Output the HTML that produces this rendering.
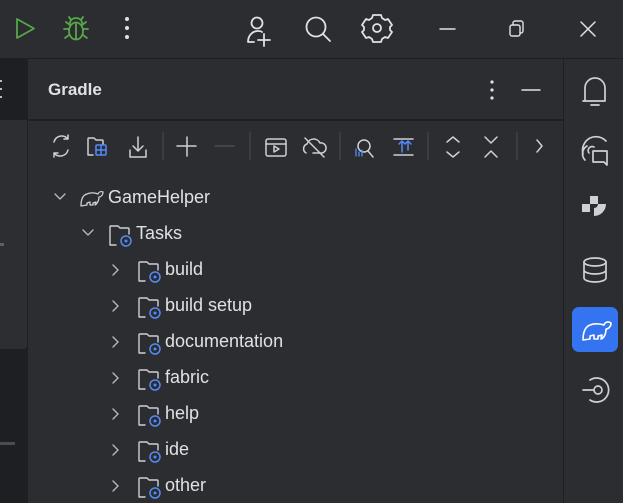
<!DOCTYPE html>
<html><head><style>
*{margin:0;padding:0;box-sizing:border-box}
body{width:623px;height:503px;background:#2b2d30;overflow:hidden;position:relative;font-family:"Liberation Sans",sans-serif;color:#dfe1e5}
.a{position:absolute}
svg{position:absolute;overflow:visible}
.t{position:absolute;font-size:18px;color:#dfe1e5;white-space:nowrap}
</style></head><body>
<div class="a" style="left:0;top:0;width:623px;height:58px;background:#2b2d30"></div>
<div class="a" style="left:0;top:58px;width:623px;height:1px;background:#1e1f22"></div>
<svg width="623" height="58" style="left:0;top:0" fill="none" stroke-width="1.8" stroke-linecap="round" stroke-linejoin="round">
 <path d="M17 19 L17 38 L34 28.5 Z" stroke="#57a64a"/>
 <g stroke="#57a64a"><ellipse cx="76" cy="31" rx="7" ry="8.5"/><path d="M70 23 a6 5 0 0 1 12 0 M76 24 V39 M69 29 H64 M83 29 H88 M69 35 L65 38 M83 35 L87 38 M70 25 L66 22 M82 25 L86 22 M71 20 L69 17 M81 20 L83 17"/></g>
 <g fill="#dfe1e5" stroke="none"><circle cx="127" cy="19" r="2"/><circle cx="127" cy="28" r="2"/><circle cx="127" cy="37" r="2"/></g>
 <g stroke="#dfe1e5"><circle cx="257" cy="23" r="5.5"/><path d="M248 42 c0-6 4-11 10-11 c2 0 3 0 4 1 M248 42 H254 M264 34 V46 M258 40 H270"/></g>
 <g stroke="#dfe1e5"><circle cx="316" cy="27" r="9.5"/><path d="M323 34 L330 41"/></g>
 <g stroke="#dfe1e5"><circle cx="377" cy="28" r="4"/><path d="M373 15 h8 l1 3 3 2 3-1 4 6 -2 2 v3 l2 2 -4 6 -3 -1 -3 2 -1 3 h-8 l-1 -3 -3 -2 -3 1 -4 -6 2 -2 v-3 l-2 -2 4 -6 3 1 3 -2 z"/></g>
 <path d="M440 29 H455" stroke="#dfe1e5" stroke-width="1.4"/>
 <g stroke="#dfe1e5" stroke-width="1.4"><rect x="510" y="25" width="10" height="11" rx="2"/><path d="M513 25 v-2 a2 2 0 0 1 2-2 h6 a2 2 0 0 1 2 2 v8 a2 2 0 0 1 -2 2 h-1"/></g>
 <path d="M581 22 L595 36 M595 22 L581 36" stroke="#dfe1e5" stroke-width="1.5"/>
</svg>
<div class="a" style="left:0;top:59px;width:28px;height:444px;background:#1e1f22"></div>
<div class="a" style="left:0;top:120px;width:27px;height:229px;background:#2d2e31;border-radius:0 0 3px 0"></div>
<div class="a" style="left:0;top:243px;width:4px;height:3px;background:#5a5d63"></div>
<div class="a" style="left:0;top:442px;width:15px;height:3px;background:#4a4c50"></div>
<div class="a" style="left:0;top:80px;width:2px;height:2px;background:#bbb"></div>
<div class="a" style="left:0;top:88px;width:2px;height:2px;background:#bbb"></div>
<div class="a" style="left:0;top:96px;width:2px;height:2px;background:#bbb"></div>
<div class="a" style="left:29px;top:59px;width:534px;height:444px;background:#2b2d30"></div>
<div class="a" style="left:29px;top:119px;width:534px;height:2px;background:#1e1f22"></div>
<div class="a" style="left:563px;top:59px;width:1px;height:444px;background:#1e1f22"></div>
<div class="t" style="left:48px;top:80px;font-weight:bold;font-size:17px">Gradle</div>
<svg width="623" height="503" style="left:0;top:0" fill="none" stroke-width="1.5" stroke-linecap="round" stroke-linejoin="round">
 <g fill="#dfe1e5" stroke="none"><circle cx="492" cy="82" r="1.6"/><circle cx="492" cy="90" r="1.6"/><circle cx="492" cy="98" r="1.6"/></g>
 <path d="M522 90 H540" stroke="#dfe1e5"/>
 <g stroke="#ced0d6">
  <path d="M54 142 a8 8 0 0 1 14-3 M68 135 v4 h-4 M68 150 a8 8 0 0 1 -14 3 M54 157 v-4 h4"/>
  <path d="M88 155 V139 a1 1 0 0 1 1-1 h5 l2 2 h6 a1 1 0 0 1 1 1 v3 M88 155 h5"/>
  <path d="M138 137 V150 M133 146 L138 151 L143 146 M130 150 V157 H146 V150"/>
  <path d="M187 137 V156 M177 146 H196"/>
  <rect x="266" y="139" width="20" height="17" rx="2"/><path d="M266 144 H286 M274 146 v6 l5 -3 z"/>
  <path d="M306 153 a5 5 0 0 1 1-9 a7 7 0 0 1 13-1 a5 5 0 0 1 2 10 h-9 M305 138 L324 157"/>
  <circle cx="364" cy="146" r="6"/><path d="M368 151 L373 157"/>
  <path d="M394 139 H413 M394 155 H413"/>
  <path d="M447 142 L453 137 L459 142 M447 152 L453 157 L459 152"/>
  <path d="M485 137 L491 143 L497 137 M485 157 L491 151 L497 157"/>
  <path d="M537 140 L542 146 L537 152"/>
 </g>
 <path d="M215 146 H234" stroke="#4a4c50"/>
 <g stroke="#4a4c50" stroke-width="1"><path d="M163 132 V160 M250 132 V160 M340 132 V160 M428 132 V160 M517 132 V160"/></g>
 <g stroke="#548af7"><rect x="96" y="145" width="10" height="10" rx="1"/><path d="M101 145 V155 M96 150 H106"/>
  <path d="M356 149 v7 M359 152 v4 M362 150 v6" stroke-width="1.3"/>
  <path d="M399 144 L402 141 L405 144 M402 141 V152 M405 144 L408 141 L411 144 M408 141 V150"/></g>
 <g stroke="#b4b8bf" stroke-width="1.4">
  <path d="M55 194 L60 199 L65 194"/>
  <path d="M83 230 L88 235 L93 230"/>
  <path d="M113 265 L118 270 L113 275 M113 301 L118 306 L113 311 M113 337 L118 342 L113 347 M113 373 L118 378 L113 383 M113 409 L118 414 L113 419 M113 445 L118 450 L113 455 M113 481 L118 486 L113 491"/>
 </g>
 <g stroke="#ced0d6" stroke-width="1.3"><path d="M81 206 c0-7 2-11 6-12 c4-2 9-1 11 0 c1-2 3-3 5-2 c0 3-2 5-4 5 c0 4-2 7-4 8 l1-3 -3 1 0 2 -3 0 0-3 -3 1 0 2 z"/></g>
 <g id="f"><path d="M110 245 V227 a1 1 0 0 1 1-1 h7 l2 2 h8 a1 1 0 0 1 1 1 v5 M110 245 h6" stroke="#ced0d6" stroke-width="1.4"/>
 <circle cx="126" cy="241" r="5" stroke="#548af7" stroke-width="1.5"/><circle cx="126" cy="241" r="1.5" fill="#548af7" stroke="none"/></g>
 <use href="#f" x="29" y="36"/><use href="#f" x="29" y="72"/><use href="#f" x="29" y="108"/><use href="#f" x="29" y="144"/><use href="#f" x="29" y="180"/><use href="#f" x="29" y="216"/><use href="#f" x="29" y="252"/>
 <g stroke="#ced0d6" stroke-width="1.7">
  <path d="M585 101 V88 a10 10 0 0 1 20 0 V101 H583 M591 105 h8"/>
  <path d="M585 160 a9 9 0 0 1 2-14 M583 154 a14 14 0 0 1 7-16 a14 14 0 0 1 16 3 M589 153 a4 4 0 0 1 5-6 M593 151 h14 v14 l-3-3 h-11 z"/>
  <ellipse cx="595" cy="262" rx="11" ry="4"/><path d="M584 262 v16 a11 4 0 0 0 22 0 v-16 M584 270 a11 4 0 0 0 22 0"/>
  <circle cx="598" cy="390" r="4"/><path d="M583 390 h11 M590 380 a12 12 0 1 1 0 20"/>
 </g>
 <g fill="#ced0d6"><rect x="582" y="204" width="8" height="8"/><rect x="590" y="196" width="8" height="8"/><path d="M598 204 h8 a12 12 0 0 1 -12 12 v-8 a4 4 0 0 0 4-4 z"/></g>
 <rect x="572" y="307" width="46" height="45" rx="7" fill="#3574f0" stroke="none"/>
 <path d="M583 340 c0-8 2-13 7-15 c5-2 11-1 14 0 c1-3 4-4 7-2 c0 4-3 6-5 6 c0 5-2 9-5 10 l1-4 -4 1 0 3 -4 0 0-4 -4 1 0 3 z" stroke="#fff" stroke-width="1.6"/>
</svg>
<div class="t" style="left:108px;top:187px">GameHelper</div>
<div class="t" style="left:136px;top:223px">Tasks</div>
<div class="t" style="left:165px;top:259px">build</div>
<div class="t" style="left:165px;top:295px">build setup</div>
<div class="t" style="left:165px;top:331px">documentation</div>
<div class="t" style="left:165px;top:367px">fabric</div>
<div class="t" style="left:165px;top:403px">help</div>
<div class="t" style="left:165px;top:439px">ide</div>
<div class="t" style="left:165px;top:475px">other</div>
</body></html>
